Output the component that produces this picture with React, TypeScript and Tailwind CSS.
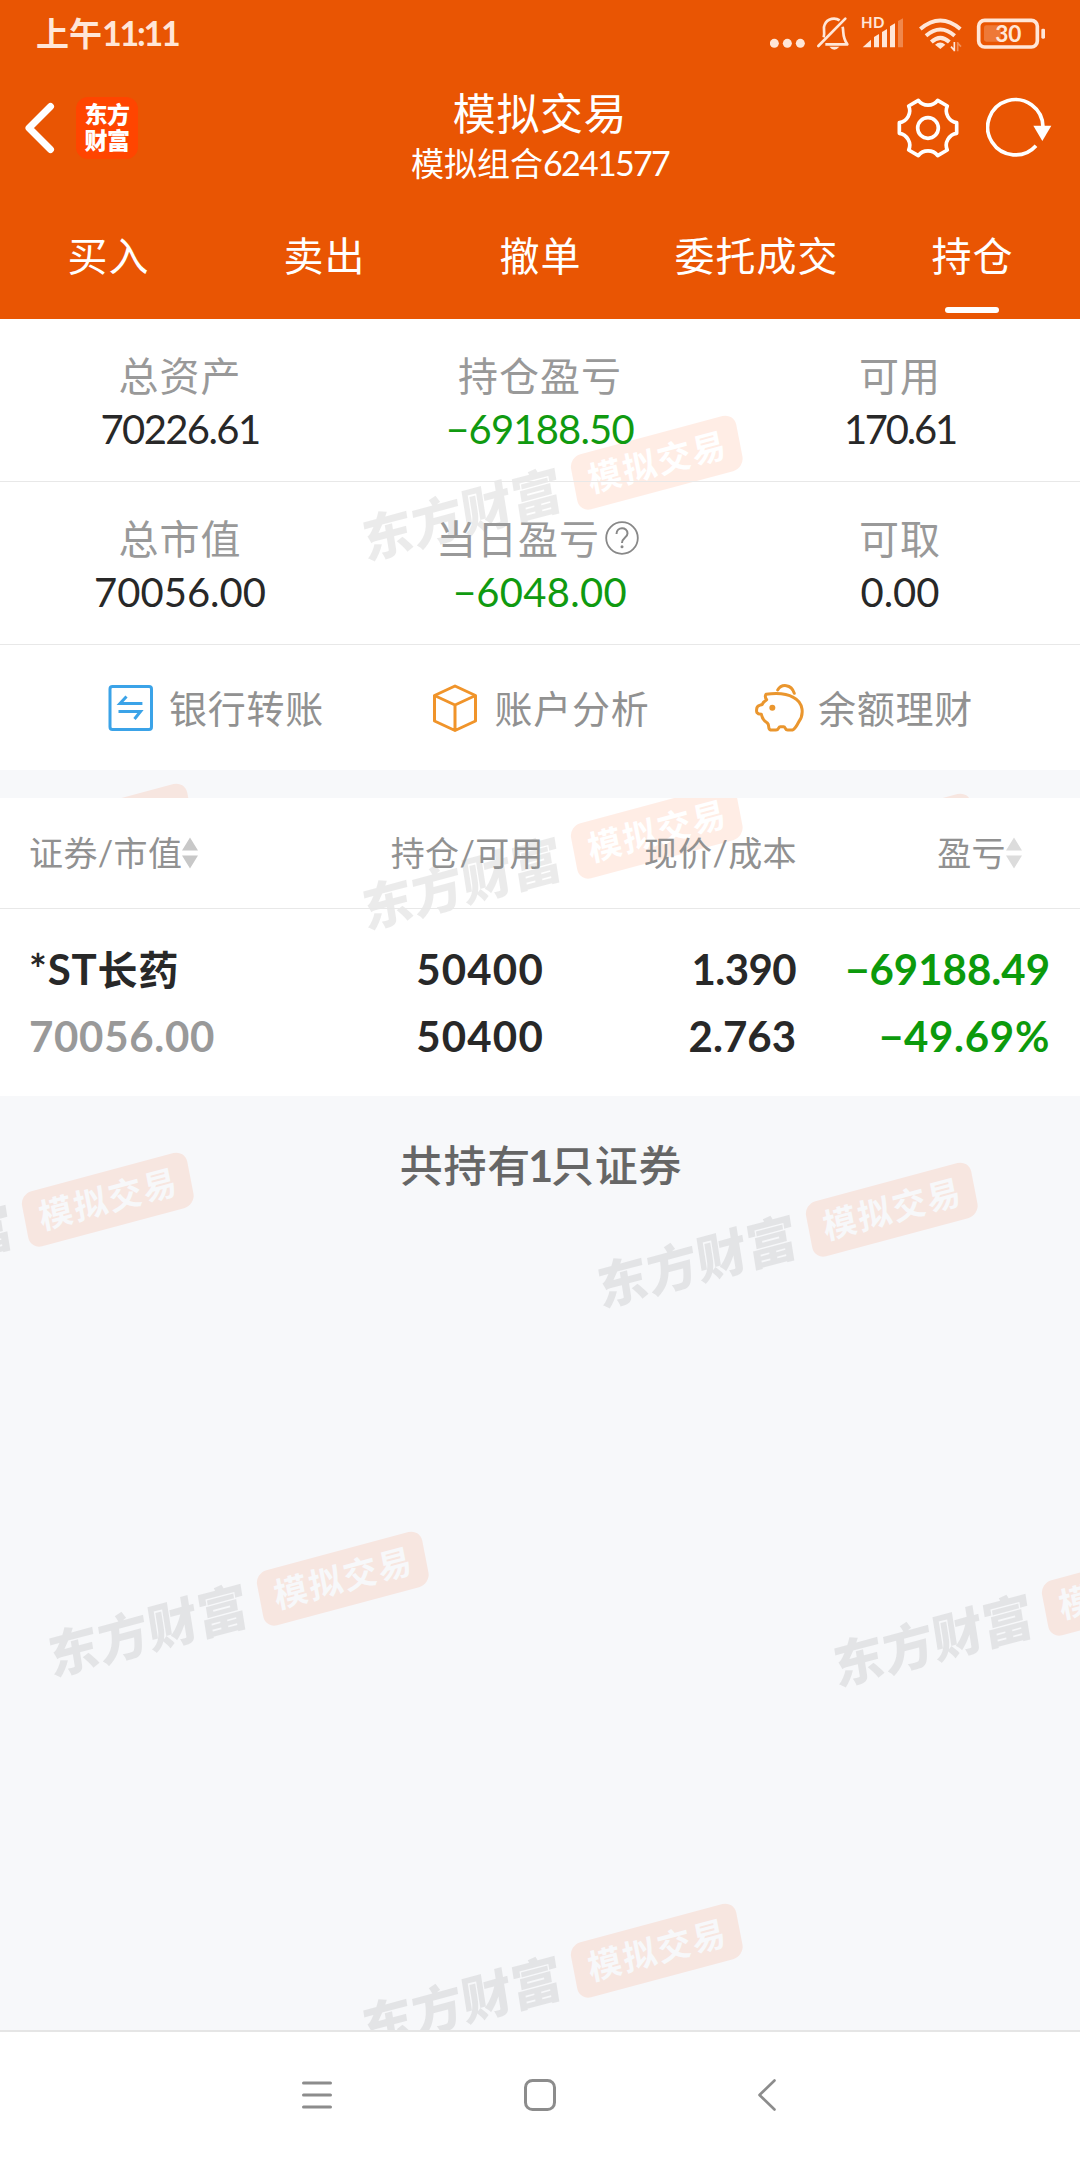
import clsx from "clsx";

const tabs = ["买入", "卖出", "撤单", "委托成交", "持仓"];

const summary = [
  [
    { label: "总资产", value: "70226.61", tracking: "tracking-[-1.6px]" },
    { label: "持仓盈亏", value: "−69188.50", down: true, tracking: "tracking-[-0.8px]" },
    { label: "可用", value: "170.61", tracking: "tracking-[-2.2px]" },
  ],
  [
    { label: "总市值", value: "70056.00" },
    { label: "当日盈亏", value: "−6048.00", down: true, help: true, tracking: "tracking-[0.3px]" },
    { label: "可取", value: "0.00" },
  ],
];

const Watermark = ({ x, y, hole }: { x: number; y: number; hole: string }) => (
  <div
    className="absolute flex h-[58px] w-[390px] origin-center -translate-x-1/2 -translate-y-1/2 -rotate-[15deg] items-center justify-between"
    style={{ left: x, top: y }}
  >
    <span className="-skew-x-[6deg] whitespace-nowrap text-[51px] font-black leading-[56px] tracking-[0.500px] text-black/8">
      东方财富
    </span>
    <span
      className={clsx(
        "flex h-[56px] w-[171px] -skew-x-[4deg] items-center justify-center whitespace-nowrap rounded-[12px] bg-[#ff4b00]/10 pb-[2px] pl-[2px] text-[34px] font-bold leading-none tracking-[1.800px]",
        hole
      )}
    >
      模拟交易
    </span>
  </div>
);

const StatusBar = () => (
  <div className="flex h-[66px] items-center justify-between pl-[36px] pr-[34px] text-[#ffe6d8]">
    <div className="text-[33px] font-bold leading-none">
      上午<span className="text-[34px] tracking-[-2.200px]">11:11</span>
    </div>
    <svg width="276" height="40" viewBox="30 7 828 120" fill="none" stroke="currentColor">
      <g fill="currentColor" stroke="none">
        <circle cx="43" cy="98" r="13.5" />
        <circle cx="82" cy="98" r="13.5" />
        <circle cx="121" cy="98" r="13.5" />
      </g>
      {/* muted bell */}
      <path d="M175 106 L256 24" strokeWidth="8" strokeLinecap="round" />
      <path d="M191 80 C196 65 188 52 194 42 C202 22 226 20 239 29" strokeWidth="8" />
      <path d="M248 48 C252 68 246 78 262 101 L196 101" strokeWidth="8" strokeLinejoin="round" />
      <path d="M208 108 Q223 126 238 108Z" fill="currentColor" stroke="none" />
      {/* signal */}
      <text
        x="303"
        y="53"
        fontSize="45"
        fontWeight="700"
        fill="currentColor"
        stroke="none"
        textLength="70"
      >
        HD
      </text>
      <g fill="currentColor" stroke="none">
        <path d="M308 110 L333 87 V110Z" />
        <path d="M342 110 V79 L357 70 V110Z" />
        <path d="M366 110 V64 L381 55 V110Z" />
        <path d="M390 110 V47 L405 38 V110Z" />
        <path d="M414 110 V31 L429 23 V110Z" opacity="0.35" />
      </g>
      {/* wifi */}
      <g strokeWidth="12">
        <path d="M481 55 Q541 4 601 55" />
        <path d="M498 75 Q541 38 584 75" />
        <path d="M514 94 Q541 69 568 94" />
      </g>
      <path d="M525 102 Q541 89 556 102 L541 115Z" fill="currentColor" stroke="none" />
      <path d="M583 94 V122 M583 119 L573 108" strokeWidth="5" />
      <path d="M593 122 V94 M593 97 L603 108" strokeWidth="5" opacity="0.4" />
      {/* battery */}
      <rect x="656" y="29" width="176" height="80" rx="18" strokeWidth="11" />
      <rect x="672" y="44" width="50" height="49" rx="7" fill="currentColor" stroke="none" opacity="0.25" />
      <rect x="844" y="54" width="11" height="30" rx="4" fill="currentColor" stroke="none" />
      <text
        x="745"
        y="95"
        fontSize="68"
        fontWeight="700"
        textAnchor="middle"
        fill="currentColor"
        stroke="none"
      >
        30
      </text>
    </svg>
  </div>
);

const GearIcon = () => (
  <svg width="62" height="62" viewBox="410 260 186 186" fill="none" stroke="white" strokeWidth="11" strokeLinejoin="round">
    <path d="M474 270 C488 289 518 289 532 270 L561 287 C551 308 566 334 589 337 V369 C566 372 551 398 561 419 L532 436 C518 417 488 417 474 436 L445 419 C455 398 440 372 417 369 V337 C440 334 455 308 445 287Z" />
    <circle cx="503" cy="353" r="31" />
  </svg>
);

const RefreshIcon = () => (
  <svg width="66" height="62" viewBox="680 260 198 186" fill="none" stroke="white" strokeWidth="11">
    <path d="M851 350 A83 83 0 1 0 830 406" />
    <path d="M822 346 H876 L849 392Z" fill="white" stroke="none" />
  </svg>
);

const Header = () => (
  <header className="flex h-[319px] flex-col bg-[#e95503] text-white">
    <StatusBar />
    <div className="grid h-[123px] grid-cols-[1fr_auto_1fr] items-center">
      <div className="flex items-center pl-[24px]">
        <svg width="32" height="54" viewBox="0 0 32 54" fill="none" stroke="white" strokeWidth="7" strokeLinecap="round" strokeLinejoin="round">
          <path d="M26.500 5.500 L5 27 L26.500 48.500" />
        </svg>
        <div className="ml-[20px] flex h-[62px] w-[62px] flex-col items-center justify-center rounded-[12px] bg-[#ff4500] pb-[2px] text-[23px] font-black leading-[26px] tracking-[-0.500px]">
          <span>东方</span>
          <span>财富</span>
        </div>
      </div>
      <div className="flex flex-col items-center pt-[21px]">
        <h1 className="h-[49px] text-[43px] leading-[50px] tracking-[0.6px]">模拟交易</h1>
        <p className="h-[50px] text-[33px] leading-[50px]">
          模拟组合<span className="text-[34px] tracking-[-1.700px]">6241577</span>
        </p>
      </div>
      <div className="flex items-center justify-end gap-[27px] pr-[28px]">
        <GearIcon />
        <RefreshIcon />
      </div>
    </div>
    <nav className="grid flex-1 grid-cols-5">
      {tabs.map((tab) => (
        <div key={tab} className="flex flex-col items-center justify-between pb-[6px] pt-[37px]">
          <span className="pl-[1px] text-[40px] leading-[60px] tracking-[1px]">{tab}</span>
          {tab === "持仓" && <span className="h-[6px] w-[54px] rounded-full bg-white" />}
        </div>
      ))}
    </nav>
  </header>
);

const HelpIcon = () => (
  <svg width="34" height="34" viewBox="0 0 34 34" fill="none" stroke="#888" strokeWidth="1.800">
    <circle cx="17" cy="17" r="15.800" />
    <path d="M11.500 13 C11.500 5.500 22.500 5.500 22.500 12.500 C22.500 16.500 17 16.500 17 22" strokeWidth="2" />
    <circle cx="17" cy="25.700" r="1.500" fill="#888" stroke="none" />
  </svg>
);

const Summary = () => (
  <section className="relative h-[451px] overflow-hidden bg-white">
    <Watermark x={551} y={172} hole="text-white" />
    <div className="relative">
      {summary.map((row, i) => (
        <div
          key={i}
          className="grid h-[163px] grid-cols-3 border-b-[1px] border-[#e8e8e8] pt-[30px]"
        >
          {row.map((item) => (
            <div key={item.label} className="flex flex-col items-center">
              <div
                className={clsx(
                  "flex h-[53px] items-center text-[40px] leading-[54px] tracking-[1px] text-[#999]",
                  item.help && "pr-[5px]"
                )}
              >
                {item.label}
                {item.help && (
                  <span className="-mt-[2px] ml-[5px]">
                    <HelpIcon />
                  </span>
                )}
              </div>
              <div
                className={clsx(
                  "h-[54px] text-[40px] leading-[54px]",
                  item.down ? "text-[#109a10]" : "text-[#282828]",
                  item.tracking
                )}
              >
                {item.value}
              </div>
            </div>
          ))}
        </div>
      ))}
      <div className="grid h-[125px] grid-cols-[324px_324px_324px] items-center justify-center text-[38px] leading-[54px] tracking-[0.800px] text-[#919191]">
        <div className="flex items-center justify-center gap-[15px]">
          <svg width="46" height="48" viewBox="0 0 46 48" fill="none" stroke="#3ba3e8" strokeWidth="3">
            <rect x="2" y="2.500" width="41.500" height="43" rx="2.500" />
            <path d="M34.400 19.500 H12 L18.500 12.500 M10.500 27.500 H32.500 L26.500 35" />
          </svg>
          银行转账
        </div>
        <div className="flex items-center justify-center gap-[16px] pl-[2px]">
          <svg width="46" height="48" viewBox="0 0 46 48" fill="none" stroke="#f0942a" strokeWidth="3" strokeLinejoin="round">
            <path d="M23 2 L43.500 11.500 V37 L23 46.500 L2.500 37 V11.500Z M2.500 11.500 L23 21 L43.500 11.500 M23 21 V46" />
          </svg>
          账户分析
        </div>
        <div className="flex items-center justify-center gap-[14px]">
          <svg width="49" height="49" viewBox="45 39 147 147" fill="none" stroke="#ea962e" strokeWidth="9" strokeLinejoin="round" strokeLinecap="round">
            <path d="M78 73 C108 69 142 72 160 82 C192 98 192 135 176 156 C170 168 166 176 158 180 H143 C134 180 137 170 131 170 H121 C114 170 118 180 108 180 H92 C82 178 90 166 82 159 C70 152 66 143 64 133 C46 132 50 122 50 117 C50 104 60 107 67 103 C70 94 75 94 80 89 C73 80 76 76 78 73Z" />
            <path d="M113 60 C124 41 154 41 163 70" />
            <circle cx="97" cy="113" r="9" fill="#ea962e" stroke="none" />
          </svg>
          余额理财
        </div>
      </div>
    </div>
  </section>
);

const SortIcon = ({ faded }: { faded?: boolean }) => (
  <svg width="16" height="32" viewBox="0 0 16 32" className={faded ? "fill-[#dcdcdc]" : "fill-[#c8c8c8]"}>
    <path d="M8 0.500 L16 13.500 H0Z M0 18.500 H16 L8 31.500Z" />
  </svg>
);

const Holdings = () => (
  <section className="relative h-[298px] overflow-hidden bg-white">
    <Watermark x={551} y={62} hole="text-white" />
    <div className="relative">
      <div className="grid h-[111px] grid-cols-[300px_215px_253px_225px] items-center border-b border-[#e8e8e8] pl-[29px] text-[34px] leading-[54px] tracking-[0.400px] text-[#919191]">
        <div className="flex items-center">
          证券/市值
          <SortIcon />
        </div>
        <div className="text-right">持仓/可用</div>
        <div className="text-right">现价/成本</div>
        <div className="flex items-center justify-end">
          盈亏
          <SortIcon faded />
        </div>
      </div>
      <div className="grid grid-cols-[300px_215px_252px_254px] gap-y-[12px] pl-[29px] pt-[33px] text-[42px] font-bold leading-[54px] text-[#282828]">
        <div className="tracking-[0.800px]">
          *ST<span className="text-[40px] tracking-[1px]">长药</span>
        </div>
        <div className="text-right tracking-[1.200px]">50400</div>
        <div className="text-right tracking-[-0.600px]">1.390</div>
        <div className="text-right text-[#0c9a0c]">−69188.49</div>
        <div className="tracking-[0.700px] text-[#999]">70056.00</div>
        <div className="text-right tracking-[1.200px]">50400</div>
        <div className="text-right">2.763</div>
        <div className="text-right tracking-[0.700px] text-[#0c9a0c]">−49.69%</div>
      </div>
    </div>
  </section>
);

const NavBar = () => (
  <footer className="relative grid h-[130px] grid-cols-[202px_244px_210px] items-center justify-items-center border-t-2 border-[#e5e5e5] bg-white pb-[2px] pl-[216px]">
    <svg width="30" height="32" viewBox="0 0 30 32" stroke="#8c8c8c" strokeWidth="3" strokeLinecap="round">
      <path d="M1.500 4 H28.500 M1.500 16 H28.500 M1.500 28 H28.500" />
    </svg>
    <svg width="32" height="32" viewBox="0 0 32 32" fill="none" stroke="#8c8c8c" strokeWidth="3">
      <rect x="1.500" y="1.500" width="29" height="29" rx="7" />
    </svg>
    <svg width="18" height="32" viewBox="0 0 18 32" fill="none" stroke="#8c8c8c" strokeWidth="2.600" strokeLinecap="round" strokeLinejoin="round">
      <path d="M16.500 1.500 L1.500 16 L16.500 30.500" />
    </svg>
  </footer>
);

const App = () => (
  <div className="relative flex h-[2160px] w-[1080px] flex-col overflow-hidden bg-[#f7f8fa] font-['Lato','Noto_Sans_CJK_SC',sans-serif]">
    <Watermark x={2} y={859} hole="text-[#f7f8fa]" />
    <Watermark x={786} y={869} hole="text-[#f7f8fa]" />
    <Watermark x={2} y={1228} hole="text-[#f7f8fa]" />
    <Watermark x={786} y={1238} hole="text-[#f7f8fa]" />
    <Watermark x={237} y={1607} hole="text-[#f7f8fa]" />
    <Watermark x={1022} y={1617} hole="text-[#f7f8fa]" />
    <Watermark x={551} y={1979} hole="text-[#f7f8fa]" />
    <Header />
    <main className="flex flex-1 flex-col gap-[28px]">
      <Summary />
      <Holdings />
      <p className="relative mt-[15px] pl-[2px] text-center text-[43px] font-medium leading-[54px] tracking-[0.800px] text-[#666]">
        共持有<span className="-mx-[3px] font-bold">1</span>只证券
      </p>
    </main>
    <NavBar />
  </div>
);

export default App;
